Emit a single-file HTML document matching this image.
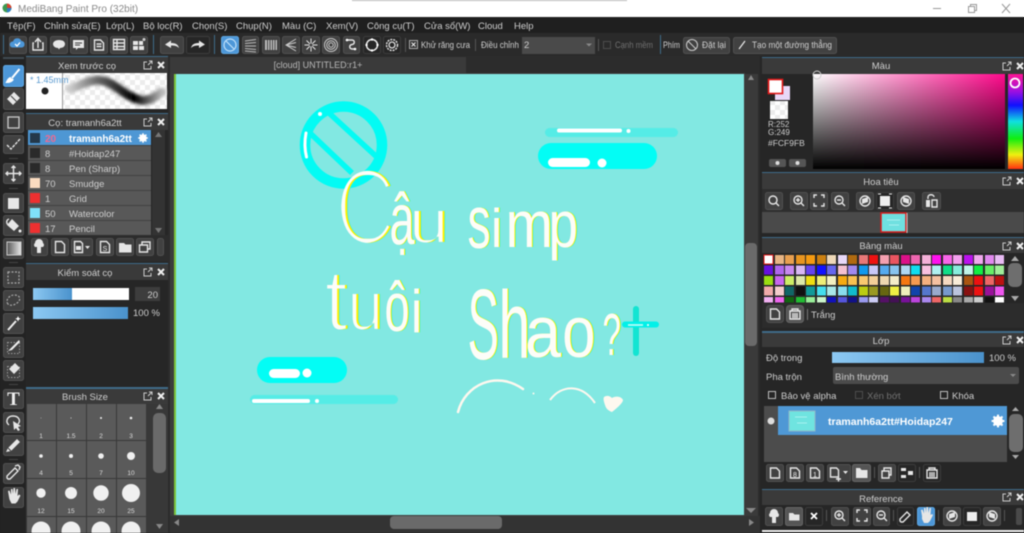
<!DOCTYPE html>
<html lang="vi"><head><meta charset="utf-8"><title>MediBang Paint Pro</title>
<style>
html,body{margin:0;padding:0;background:linear-gradient(#fff 0,#fff 17px,#232323 17px);width:1024px;height:533px;overflow:hidden}
svg{display:block;position:absolute;left:0;top:0;filter:blur(.45px)}
text{font-family:"Liberation Sans","DejaVu Sans",sans-serif;font-size:9.5px;fill:#cecece}
.b{fill:#414141;stroke:#505050;stroke-width:1}
.d{fill:#262626;stroke:#3d3d3d;stroke-width:1}
.i{fill:#e6e6e6;stroke:none}
.s{fill:none;stroke:#e6e6e6;stroke-width:1.4}
.h{fill:#3a3a3a}
.l{fill:#3f6b88}
.c{text-anchor:middle}
.w{fill:#fff;font-weight:bold}
.z{font-size:6.5px;text-anchor:middle;fill:#ddd}
.L text{font-size:100px;fill:#fff}
</style></head><body>
<svg width="1024" height="533" viewBox="0 0 1024 533" xmlns="http://www.w3.org/2000/svg">
<defs>
<linearGradient id="hg" x1="0" x2="1" y1="0" y2="0"><stop offset="0" stop-color="#fff"/><stop offset="1" stop-color="#ff0a8c"/></linearGradient>
<linearGradient id="vg" x1="0" x2="0" y1="0" y2="1"><stop offset="0" stop-color="#000" stop-opacity="0"/><stop offset="1" stop-color="#000"/></linearGradient>
<linearGradient id="hue" x1="0" x2="0" y1="0" y2="1"><stop offset="0" stop-color="#ff1493"/><stop offset=".18" stop-color="#a010e0"/><stop offset=".33" stop-color="#1010ff"/><stop offset=".5" stop-color="#10e0e0"/><stop offset=".68" stop-color="#10ee10"/><stop offset=".85" stop-color="#f0f010"/><stop offset="1" stop-color="#ff3010"/></linearGradient>
<linearGradient id="sl" x1="0" x2="1" y1="0" y2="0"><stop offset="0" stop-color="#8cc8f2"/><stop offset="1" stop-color="#4a92cc"/></linearGradient>
<linearGradient id="br" x1="0" x2="1" y1="0" y2="0"><stop offset="0" stop-color="#ccc"/><stop offset=".3" stop-color="#666"/><stop offset=".7" stop-color="#000"/><stop offset="1" stop-color="#bbb"/></linearGradient>
<linearGradient id="gr" x1="0" x2="1" y1="0" y2="0"><stop offset="0" stop-color="#555"/><stop offset="1" stop-color="#e8e8e8"/></linearGradient>
<pattern id="ck" width="10" height="10" patternUnits="userSpaceOnUse"><rect width="10" height="10" fill="#fff"/><rect width="5" height="5" fill="#ececec"/><rect x="5" y="5" width="5" height="5" fill="#ececec"/></pattern>
<filter id="sb" x="-20%" y="-50%" width="140%" height="200%"><feGaussianBlur stdDeviation="1.6"/></filter>
<g id="pc"><path d="M-11 -3h-3v7h7v-3M-10 0l4-4m-3 0h3v3" fill="none" stroke="#ccc" stroke-width="1"/><path d="M0-3l6 6m0-6l-6 6" stroke="#eee" stroke-width="2" fill="none"/></g>
<g id="gear"><circle r="3.6" fill="none" stroke="#fff" stroke-width="2.6"/><path d="M0-6.4V6.4M-6.4 0H6.4M-4.5-4.5L4.5 4.5M-4.5 4.5L4.5-4.5" stroke="#fff" stroke-width="2"/></g>
<filter id="f1" filterUnits="userSpaceOnUse" x="300" y="150" width="400" height="230" color-interpolation-filters="sRGB">
<feMorphology in="SourceAlpha" operator="erode" radius="1" result="e"/>
<feOffset in="e" dx="1.6" result="a"/><feFlood flood-color="#10f0ff"/><feComposite in2="a" operator="in" result="c"/>
<feOffset in="e" dx=".8" result="b"/><feFlood flood-color="#fff000"/><feComposite in2="b" operator="in" result="y"/>
<feOffset in="e" dx="-1" result="d"/><feFlood flood-color="#fdfdf8"/><feComposite in2="d" operator="in" result="w"/>
<feMerge><feMergeNode in="c"/><feMergeNode in="y"/><feMergeNode in="w"/></feMerge></filter>
<filter id="f2" filterUnits="userSpaceOnUse" x="300" y="150" width="400" height="230" color-interpolation-filters="sRGB">
<feMorphology in="SourceAlpha" operator="erode" radius="2" result="e"/>
<feOffset in="e" dx="1.6" result="a"/><feFlood flood-color="#10f0ff"/><feComposite in2="a" operator="in" result="c"/>
<feOffset in="e" dx=".8" result="b"/><feFlood flood-color="#fff000"/><feComposite in2="b" operator="in" result="y"/>
<feOffset in="e" dx="-1" result="d"/><feFlood flood-color="#fdfdf8"/><feComposite in2="d" operator="in" result="w"/>
<feMerge><feMergeNode in="c"/><feMergeNode in="y"/><feMergeNode in="w"/></feMerge></filter>
<filter id="f0" filterUnits="userSpaceOnUse" x="300" y="150" width="400" height="230" color-interpolation-filters="sRGB">
<feOffset in="SourceAlpha" dx="1.2" result="a"/><feFlood flood-color="#10f0ff"/><feComposite in2="a" operator="in" result="c"/>
<feOffset in="SourceAlpha" dx=".6" result="b"/><feFlood flood-color="#fff000"/><feComposite in2="b" operator="in" result="y"/>
<feOffset in="SourceAlpha" dx="-.6" result="d"/><feFlood flood-color="#fdfdf8"/><feComposite in2="d" operator="in" result="w"/>
<feMerge><feMergeNode in="c"/><feMergeNode in="y"/><feMergeNode in="w"/></feMerge></filter>
</defs>

<!-- base -->
<rect width="1024" height="533" fill="#232323"/>
<!-- title bar -->
<rect width="1024" height="17" fill="#fff"/>
<rect x="352" y="0" width="275" height="1" fill="#b8b8b8"/>
<circle cx="7" cy="8" r="4.5" fill="#3d9a52"/><path d="M7 3.5a4.5 4.5 0 0 1 4.5 4.5H7z" fill="#d8402c"/><path d="M7 8h4.5A4.5 4.5 0 0 1 7 12.500z" fill="#2f7bc0"/>
<text x="18" y="12" style="font-size:10px;fill:#8a8a8a">MediBang Paint Pro (32bit)</text>
<path d="M933 8.500h8" stroke="#999"/><path d="M968.500 6.500h6v6h-6zM970.500 6.500v-2h6v6h-2" fill="none" stroke="#999"/><path d="M1002 4l8 9m0-9l-8 9" stroke="#999" fill="none"/>
<!-- menu -->
<rect y="17" width="1024" height="16" fill="#1f1f1f"/>
<g>
<text x="7" y="29">Tệp(F)</text><text x="44" y="29">Chỉnh sửa(E)</text><text x="106" y="29">Lớp(L)</text><text x="143" y="29">Bộ lọc(R)</text><text x="192" y="29">Chọn(S)</text><text x="236" y="29">Chụp(N)</text><text x="282" y="29">Màu (C)</text><text x="326" y="29">Xem(V)</text><text x="367" y="29">Công cụ(T)</text><text x="424" y="29">Cửa sổ(W)</text><text x="478" y="29">Cloud</text><text x="514" y="29">Help</text>
</g>
<!-- toolbar -->
<rect y="33" width="1024" height="23" fill="#2a2a2a"/>
<rect x="3" y="35" width="1" height="19" fill="#3f6b88"/><rect x="153" y="35" width="1" height="19" fill="#3f6b88"/><rect x="214" y="35" width="1" height="19" fill="#3f6b88"/><rect x="660" y="35" width="1" height="19" fill="#3f6b88"/>
<rect x="9.500" y="36.500" width="17" height="17" rx="2" fill="#414141" stroke="#505050"/>
<path d="M12.500 47.500a3 3 0 0 1 .5-6 4.500 4.500 0 0 1 8.500-.5 3.300 3.300 0 0 1 .5 6.500z" fill="#4d97d8"/><path d="M15 44l2 2 3-3.500" stroke="#fff" stroke-width="1.300" fill="none"/>
<rect class="b" x="29.500" y="36.500" width="17" height="17" rx="2"/><path class="s" d="M38 48v-8M35 42l3-3.500 3 3.500M34 43h-1v7h10v-7h-1"/>
<rect class="b" x="50.500" y="36.500" width="17" height="17" rx="2"/><path class="i" d="M59 40c4 0 6 1.800 6 4s-2 4-5 4l-1 1.500-1-1.500c-3 0-5-2-5-4s2-4 6-4z"/>
<rect class="b" x="70.500" y="36.500" width="17" height="17" rx="2"/><path class="i" d="M73 40h11v8h-6l-2 2v-2h-3z"/><path d="M75 43h7M75 45h5" stroke="#3d3d3d"/>
<rect class="b" x="90.500" y="36.500" width="17" height="17" rx="2"/><path class="s" d="M94.500 40h6l3 3v7h-9zM96.500 44h5M96.500 46.500h5"/>
<rect class="b" x="110.500" y="36.500" width="17" height="17" rx="2"/><path class="s" stroke-width="1" d="M113.500 39.500h11v10h-11zM113.500 43h11M113.500 46.500h11M117 39.500v10"/>
<rect class="b" x="130.500" y="36.500" width="17" height="17" rx="2"/><path class="i" d="M133 41h5v4h-5zM139 41h4v4h-4zM133 46h5v4h-5zM139 46h5v4h-5z"/><circle cx="144" cy="39.500" r="1.500" fill="#ccc"/>
<rect class="b" x="160.500" y="36.500" width="23" height="17" rx="2"/><path class="i" d="M165 44.500l6-4v2.500c4 0 7 1 8 5-2-2-4-2.500-8-2.500V48z"/>
<rect class="d" x="186.500" y="36.500" width="23" height="17" rx="2"/><path class="i" d="M205 44.500l-6-4v2.500c-4 0-7 1-8 5 2-2 4-2.500 8-2.500V48z"/>
<rect x="221.500" y="36.500" width="17" height="17" rx="2" fill="#4d97d8" stroke="#5ea6e0"/><circle cx="230" cy="45" r="6" fill="none" stroke="#bfe0fa" stroke-width="1.200"/><path d="M226 41l8 8" stroke="#bfe0fa" stroke-width="1.200"/>
<rect class="b" x="242.500" y="36.500" width="16" height="17" rx="2"/><path d="M245 41l11-1.500M245 43.500l11-1M245 46h11M245 48.500l11 1M245 51l11 1" stroke="#bbb" fill="none"/>
<rect class="b" x="262.500" y="36.500" width="17" height="17" rx="2"/><path d="M265 40h12v10h-12z" fill="#bbb"/><path d="M267.500 40v10M270 40v10M272.500 40v10M275 40v10" stroke="#444" fill="none"/>
<rect class="b" x="282.500" y="36.500" width="17" height="17" rx="2"/><path d="M296 39l-10 6 10 6M296 42.500l-10 2.500 10 2.500" stroke="#ccc" fill="none"/>
<rect class="b" x="302.500" y="36.500" width="17" height="17" rx="2"/><path d="M311 38.500v13M304.500 45h13M306.500 40.500l9 9M315.500 40.500l-9 9" stroke="#e6e6e6"/><circle cx="311" cy="45" r="1.500" fill="#3d3d3d"/>
<rect class="b" x="322.500" y="36.500" width="17" height="17" rx="2"/><circle cx="331" cy="45" r="6.500" fill="none" stroke="#ccc"/><circle cx="331" cy="45" r="4.300" fill="none" stroke="#ccc"/><circle cx="331" cy="45" r="2.200" fill="none" stroke="#ccc"/>
<rect class="b" x="343.500" y="36.500" width="16" height="17" rx="2"/><path class="s" d="M347 40h5c3 0 3 4 0 4.500-3 .5-3 4 0 4.500h3"/><circle cx="347" cy="40" r="1.300" fill="#fff"/><circle cx="355" cy="49" r="1.300" fill="#fff"/>
<rect class="d" x="363.500" y="36.500" width="17" height="17" rx="2"/><circle cx="372" cy="45" r="5.500" fill="none" stroke="#eee" stroke-width="1.500"/><circle cx="372" cy="39.500" r="1.200" fill="#fff"/><circle cx="372" cy="50.500" r="1.200" fill="#fff"/><circle cx="366.500" cy="45" r="1.200" fill="#fff"/><circle cx="377.500" cy="45" r="1.200" fill="#fff"/>
<rect class="d" x="383.500" y="36.500" width="17" height="17" rx="2"/><circle cx="392" cy="45" r="3" fill="none" stroke="#ddd" stroke-width="1.300"/><circle cx="392" cy="45" r="5.500" fill="none" stroke="#ddd" stroke-width="1.500" stroke-dasharray="2 1"/>
<rect x="405" y="38" width="1" height="14" fill="#555"/>
<rect x="409.500" y="40.500" width="8" height="8" fill="#333" stroke="#aaa"/><path d="M411.500 42.500l4 4m0-4l-4 4" stroke="#eee"/>
<text x="421" y="48" textLength="49" lengthAdjust="spacingAndGlyphs">Khử răng cưa</text>
<rect x="475" y="39" width="1" height="12" fill="#555"/>
<text x="481" y="48" textLength="38" lengthAdjust="spacingAndGlyphs">Điều chỉnh</text>
<rect x="522" y="37" width="73" height="17" fill="#4a4a4a"/><text x="524" y="48">2</text><path d="M586 43.500h6l-3 3z" fill="#888"/>
<rect x="598" y="39" width="1" height="12" fill="#555"/>
<rect x="603.500" y="41.500" width="7" height="7" fill="none" stroke="#4c4c4c"/>
<text x="615" y="48" textLength="38" lengthAdjust="spacingAndGlyphs" style="fill:#707070">Cạnh mềm</text>
<text x="663" y="48" textLength="17" lengthAdjust="spacingAndGlyphs">Phím</text>
<rect class="b" x="683.500" y="37.500" width="46" height="16" rx="2"/><circle cx="692" cy="45" r="5.500" fill="none" stroke="#ccc"/><path d="M688 41l8 8" stroke="#ccc"/><text x="702" y="48" textLength="24" lengthAdjust="spacingAndGlyphs">Đặt lại</text>
<rect class="b" x="733.500" y="37.500" width="103" height="16" rx="2"/><path d="M739 49l6-8" stroke="#eee" stroke-width="1.200"/><text x="752" y="48" textLength="80" lengthAdjust="spacingAndGlyphs">Tạo một đường thẳng</text>

<!-- left tool column -->
<rect x="0" y="56" width="26" height="477" fill="#232323"/>
<rect x="3" y="57" width="21" height="2" fill="#3f4a52"/>
<rect x="3.500" y="65.500" width="20" height="21" rx="2" fill="#4d97d8" stroke="#5ea6e0"/><path d="M19.500 69l-7.500 9M11 78c-2 0-3 2-4 4 3 0 5-1 6-3" stroke="#fff" stroke-width="2" fill="#fff"/>
<rect class="b" x="3.500" y="88.500" width="20" height="21" rx="2"/><path class="i" d="M14 92l6 6-7 7-6-6z"/><path d="M11 96l5.500 5.500" stroke="#3d3d3d"/>
<rect class="b" x="3.500" y="112.500" width="20" height="20" rx="2"/><rect x="8" y="117" width="11" height="11" fill="none" stroke="#ccc" stroke-width="1.300"/>
<rect class="b" x="3.500" y="135.500" width="20" height="18" rx="2"/><path class="s" d="M7 145l4 4 9-10" stroke-dasharray="3 1" stroke-width="1.800"/>
<rect x="9" y="158" width="9" height="1" fill="#444"/>
<rect class="b" x="3.500" y="163.500" width="20" height="20" rx="2"/><path class="s" d="M13.500 166v15M6 173.500h15M11.500 168l2-2 2 2M11.500 179l2 2 2-2M8 171.500l-2 2 2 2M19 171.500l2 2-2 2"/>
<rect x="9" y="188" width="9" height="1" fill="#444"/>
<rect class="b" x="3.500" y="193.500" width="20" height="19" rx="2"/><rect x="8" y="198" width="11" height="11" fill="#e8e8e8"/>
<rect class="b" x="3.500" y="215.500" width="20" height="20" rx="2"/><path class="i" d="M12 219l7 7-5 5-7-6z"/><path d="M9 219c-3 1-3 5 0 6" class="s"/><circle cx="20" cy="231" r="1.500" fill="#eee"/>
<rect class="b" x="3.500" y="238.500" width="20" height="20" rx="2"/><rect x="7" y="242" width="14" height="13" fill="url(#gr)" stroke="#ccc"/>
<rect x="9" y="262" width="9" height="1" fill="#444"/>
<rect class="b" x="3.500" y="267.500" width="20" height="20" rx="2"/><rect x="8" y="272" width="11" height="11" fill="none" stroke="#aaa" stroke-dasharray="2 1.500" stroke-width="1.200"/>
<rect class="b" x="3.500" y="290.500" width="20" height="20" rx="2"/><path d="M8 304c-3-3 1-9 6-9s7 3 5 6-8 6-11 3z" fill="none" stroke="#aaa" stroke-dasharray="2 1.500" stroke-width="1.200"/>
<rect class="b" x="3.500" y="313.500" width="20" height="20" rx="2"/><path d="M8 330l8-9" stroke="#eee" stroke-width="2"/><path d="M18 316l.8 2 2 .8-2 .8-.8 2-.8-2-2-.8 2-.8z" fill="#fff"/>
<rect class="b" x="3.500" y="337.500" width="20" height="20" rx="2"/><rect x="7.500" y="342.500" width="12" height="11" fill="none" stroke="#999" stroke-dasharray="1.500 1.500"/><path d="M8 351l3-3 8-8 1 2-8 8z" fill="#eee"/>
<rect class="b" x="3.500" y="360.500" width="20" height="20" rx="2"/><rect x="7.500" y="366.500" width="12" height="11" fill="none" stroke="#999" stroke-dasharray="1.500 1.500"/><path class="i" d="M15 363l5 5-6 6-5-5z"/>
<rect x="9" y="384" width="9" height="1" fill="#444"/>
<rect class="b" x="3.500" y="389.500" width="20" height="19" rx="2"/><text x="13.500" y="405" class="c" style="font-family:'Liberation Serif',serif;font-size:19px;font-weight:bold;fill:#eee">T</text>
<rect class="b" x="3.500" y="412.500" width="20" height="20" rx="2"/><path class="s" d="M9 425c-4-3-2-9 4-9s8 5 5 8"/><path class="i" d="M13 421l8 5-3 1 2 3-2 1-2-3-2 2z"/>
<rect class="b" x="3.500" y="435.500" width="20" height="20" rx="2"/><path class="i" d="M8 448l9-9 3 3-9 9-5 1z"/><path d="M8 448l3 3" stroke="#3d3d3d"/>
<rect x="9" y="459" width="9" height="1" fill="#444"/>
<rect class="b" x="3.500" y="463.500" width="20" height="20" rx="2"/><path class="s" d="M8 479l-1-1 0-2 8-8 3 3-8 8zM15 466l3-1 2 2-1 3"/>
<rect class="b" x="3.500" y="487.500" width="20" height="20" rx="2"/><path class="i" d="M9 497l-1-6 1.500-.5 1.500 4V489h1.500l.5 5 .5-6h1.500l.5 6 1-5h1.500l-.5 7 1.500-1.500 1.500 1-3 6-2 2h-4l-2-4z"/>

<!-- brush preview panel -->
<rect x="26" y="56" width="142" height="477" fill="#262626"/>
<rect x="26" y="56" width="142" height="1" class="l"/>
<rect x="26" y="57" width="142" height="16" class="h"/>
<text x="87" y="69" class="c">Xem trước cọ</text>
<use href="#pc" x="158" y="65"/>
<rect x="26" y="73" width="141" height="36" fill="url(#ck)"/>
<rect x="26" y="73" width="36" height="36" fill="#fff"/><rect x="62" y="73" width="1" height="36" fill="#999"/>
<text x="30" y="83" style="fill:#5a9ad0;font-size:9px">* 1.45mm</text>
<circle cx="45" cy="91" r="3.500" fill="#222"/>
<path d="M70 89C84 84 92 78 104 81s20 15 36 19c10 2 16-4 22-8" fill="none" stroke="url(#br)" stroke-width="9" stroke-linecap="round" filter="url(#sb)"/>
<rect x="26" y="113" width="142" height="1" class="l"/>
<rect x="26" y="114" width="142" height="16" class="h"/>
<text x="85" y="126" class="c">Cọ: tramanh6a2tt</text>
<use href="#pc" x="158" y="122"/>
<!-- brush list -->
<rect x="28" y="130" width="123" height="105" fill="#585858"/>
<rect x="28" y="130" width="123" height="15" fill="#4e97d4"/>
<path d="M28 145.500h123M28 160.500h123M28 175.500h123M28 190.500h123M28 205.500h123M28 220.500h123" stroke="#414141"/>
<rect x="30" y="133" width="10" height="10" fill="#24384a"/><rect x="30" y="148" width="10" height="10" fill="#2a2a2a"/><rect x="30" y="163" width="10" height="10" fill="#2a2a2a"/><rect x="30" y="178" width="10" height="10" fill="#fbdcc0"/><rect x="30" y="193" width="10" height="10" fill="#ee3030"/><rect x="30" y="208" width="10" height="10" fill="#80e0f8"/><rect x="30" y="223" width="10" height="10" fill="#ee3030"/>
<text x="45" y="142" style="fill:#f06a90;font-weight:bold;font-size:10px">20</text><text x="69" y="142" class="w" style="font-size:10px">tramanh6a2tt</text>
<use href="#gear" transform="translate(143 138) scale(.75)"/>
<text x="45" y="157">8</text><text x="69" y="157">#Hoidap247</text>
<text x="45" y="172">8</text><text x="69" y="172">Pen (Sharp)</text>
<text x="45" y="187">70</text><text x="69" y="187">Smudge</text>
<text x="45" y="202">1</text><text x="69" y="202">Grid</text>
<text x="45" y="217">50</text><text x="69" y="217">Watercolor</text>
<text x="45" y="232">17</text><text x="69" y="232">Pencil</text>
<rect x="152" y="130" width="13" height="105" fill="#333"/>
<path d="M155 137l3.500-5 3.500 5z" fill="#777"/><path d="M155 228l3.500 5 3.500-5z" fill="#777"/>
<!-- brush list buttons -->
<rect x="26" y="235" width="142" height="27" fill="#2c2c2c"/>
<rect class="b" x="31.500" y="238.500" width="16" height="17" rx="2"/><path class="i" d="M35 247a2.500 2.500 0 0 1 0-4 4 4 0 0 1 8 0 2.500 2.500 0 0 1 0 4h-2v6h-4v-6z"/>
<rect class="b" x="51.500" y="238.500" width="17" height="17" rx="2"/><path class="s" d="M55.500 241.500h6l3 3v8h-9z"/>
<rect class="b" x="71.500" y="238.500" width="21" height="17" rx="2"/><path class="s" d="M74.500 241.500h6l2 2v9h-8z"/><rect x="76" y="246" width="5" height="4" fill="#e6e6e6"/><path d="M85 246h5l-2.500 3z" fill="#e6e6e6"/>
<rect class="b" x="96.500" y="238.500" width="17" height="17" rx="2"/><path class="s" d="M100.500 241.500h6l3 3v8h-9z"/><text x="105" y="251" class="c" style="font-size:7px;fill:#eee">S</text>
<rect class="b" x="116.500" y="238.500" width="17" height="17" rx="2"/><path class="i" d="M119 243h5l1.500 1.500h6v8H119z"/>
<rect class="b" x="136.500" y="238.500" width="17" height="17" rx="2"/><path class="s" d="M139.500 245h8v7h-8zM142 245v-3h8v7h-2.500" stroke-width="1"/>
<rect class="b" x="157.500" y="238.500" width="6" height="17" rx="2"/>
<!-- kiem soat co -->
<rect x="26" y="263" width="142" height="1" class="l"/>
<rect x="26" y="264" width="142" height="16" class="h"/>
<text x="85" y="276" class="c">Kiểm soát cọ</text>
<use href="#pc" x="158" y="272"/>
<rect x="33" y="288" width="96" height="12" fill="#fff"/><rect x="33" y="288" width="39" height="12" fill="url(#sl)"/>
<rect x="135" y="287" width="25" height="14" fill="#3d3d3d"/><text x="158" y="298" style="text-anchor:end">20</text>
<rect x="33" y="307" width="95" height="12" fill="url(#sl)"/><text x="133" y="316">100 %</text>
<!-- brush size -->
<rect x="26" y="387" width="142" height="2" class="l"/>
<rect x="26" y="389" width="142" height="15" class="h"/>
<text x="85" y="400" class="c">Brush Size</text>
<use href="#pc" x="158" y="396"/>
<rect x="26" y="404" width="142" height="129" fill="#383838"/>
<g fill="#5a5a5a">
<rect x="27" y="404" width="29" height="36"/><rect x="57" y="404" width="29" height="36"/><rect x="87" y="404" width="29" height="36"/><rect x="117" y="404" width="29" height="36"/>
<rect x="27" y="441" width="29" height="37"/><rect x="57" y="441" width="29" height="37"/><rect x="87" y="441" width="29" height="37"/><rect x="117" y="441" width="29" height="37"/>
<rect x="27" y="479" width="29" height="37"/><rect x="57" y="479" width="29" height="37"/><rect x="87" y="479" width="29" height="37"/><rect x="117" y="479" width="29" height="37"/>
<rect x="27" y="517" width="29" height="16"/><rect x="57" y="517" width="29" height="16"/><rect x="87" y="517" width="29" height="16"/><rect x="117" y="517" width="29" height="16"/>
</g>
<g fill="#f0f0f0">
<circle cx="41" cy="418" r=".5" opacity=".5"/><circle cx="71" cy="418" r=".6" opacity=".7"/><circle cx="101" cy="418" r="1"/><circle cx="131" cy="418" r="1.300"/>
<circle cx="41" cy="456" r="1.800"/><circle cx="71" cy="456" r="2"/><circle cx="101" cy="456" r="2.800"/><circle cx="131" cy="456" r="4"/>
<circle cx="41" cy="493" r="4.700"/><circle cx="71" cy="493" r="6"/><circle cx="101" cy="493" r="7.700"/><circle cx="131" cy="493" r="9"/>
<circle cx="41" cy="531" r="9.500"/><circle cx="71" cy="531" r="9.500"/><circle cx="101" cy="531" r="9.500"/><circle cx="131" cy="531" r="9.500"/>
</g>
<text class="z" x="41" y="438">1</text><text class="z" x="71" y="438">1.5</text><text class="z" x="101" y="438">2</text><text class="z" x="131" y="438">3</text>
<text class="z" x="41" y="475">4</text><text class="z" x="71" y="475">5</text><text class="z" x="101" y="475">7</text><text class="z" x="131" y="475">10</text>
<text class="z" x="41" y="513">12</text><text class="z" x="71" y="513">15</text><text class="z" x="101" y="513">20</text><text class="z" x="131" y="513">25</text>
<path d="M156 409l3.500-5 3.500 5z" fill="#888"/><path d="M156 524l3.500 5 3.500-5z" fill="#888"/>
<rect x="153" y="413" width="13" height="60" rx="5" fill="#6a6a6a"/>

<!-- canvas area -->
<rect x="168" y="56" width="594" height="477" fill="#2c2c2c"/>
<rect x="170" y="57" width="296" height="16" fill="#3a3a3a"/>
<text x="318" y="68" class="c" style="font-size:9px;fill:#b8b8b8">[cloud] UNTITLED:r1+</text>
<rect x="170" y="73" width="575" height="443" fill="#3c3c3c"/>
<rect x="174" y="74" width="570" height="441" fill="#82e8e2"/>
<rect x="174" y="74" width="2" height="441" fill="#7cc23a"/>
<!-- art -->
<circle cx="343.500" cy="145" r="38.500" fill="none" stroke="#03fbf4" stroke-width="10.500"/>
<path d="M329 113l50 46M310 133l42 40" stroke="#03fbf4" stroke-width="5.500" fill="none"/>
<path d="M306 133c-1.500 8-1.500 16 .5 24" stroke="#fff" stroke-width="3" fill="none" stroke-linecap="round"/>
<circle cx="320" cy="114" r="2" fill="#fff"/>
<rect x="545" y="128" width="133" height="9" rx="4.500" fill="#55ece6"/>
<rect x="557" y="128.500" width="65" height="4" rx="2" fill="#fff"/><circle cx="628.500" cy="131" r="2" fill="#fff"/>
<rect x="538" y="143" width="119" height="26" rx="13" fill="#03fdf5"/>
<rect x="548" y="158" width="42" height="9" rx="4.500" fill="#fff"/><circle cx="602" cy="163" r="4.500" fill="#fff"/>
<rect x="257" y="357" width="90" height="26" rx="13" fill="#03fdf5"/>
<rect x="269" y="369" width="31" height="9" rx="4.500" fill="#fff"/><circle cx="307" cy="373" r="4.500" fill="#fff"/>
<rect x="250" y="395" width="148" height="9" rx="4.500" fill="#55ece6"/>
<rect x="252" y="399" width="58" height="4" rx="2" fill="#fff"/><circle cx="317" cy="401" r="2" fill="#fff"/>
<path d="M636 309v44" stroke="#12e4d2" stroke-width="6" stroke-linecap="round"/>
<path d="M625 324.500h31" stroke="#03f0e8" stroke-width="6" stroke-linecap="round"/>
<path d="M628 325h15" stroke="#c8fbf6" stroke-width="1.600"/><circle cx="648" cy="325" r="1" fill="#fff"/>
<path d="M458 412c7-27 38-42 65-23" stroke="#fdf8ef" stroke-width="2.500" fill="none" stroke-linecap="round"/>
<path d="M550 400c12-16 32-16 45 3" stroke="#fdf8ef" stroke-width="2" fill="none"/>
<circle cx="533.500" cy="393.500" r="1" fill="#fdf8ef"/>
<path d="M604 397c3-2 6-1 8 1 3-2 9-2 11 2 0 3-7 9-11 12-3-1-6-3-7-7-1-3-2-6-1-8z" fill="#fdf8ef"/>
<g class="L" filter="url(#f2)">
<text transform="translate(336 244) scale(.84 1.08)">C</text>
</g>
<g class="L" filter="url(#f1)">
<text transform="translate(410 243) scale(.71 .62)">u</text>
<text transform="translate(326 330) scale(.8 .86)">t</text>
<text transform="translate(348.500 330) scale(.64 .7)">u</text>
</g>
<g class="L" filter="url(#f0)">
<text transform="translate(390 244) scale(.45 .72)">ậ</text>
<text transform="translate(468 248) scale(.46 .75)">s</text>
<text transform="translate(491.500 247) scale(.5 .55)">i</text>
<text transform="translate(506 247) scale(.57 .66)">m</text>
<text transform="translate(549 247) scale(.53 .66)">p</text>
<text transform="translate(385 331) scale(.45 .7)">ô</text>
<text transform="translate(411.500 332) scale(.5 .6)">i</text>
<text transform="translate(468 359) scale(.47 1)">S</text>
<text transform="translate(499 358) scale(.57 .96)">h</text>
<text transform="translate(525.400 357) scale(.65 .72)">a</text>
<text transform="translate(562.600 357) scale(.6 .72)">o</text>
<text transform="translate(603 355) scale(.33 .59)">?</text>
</g>
<!-- canvas scrollbars -->
<rect x="745" y="74" width="13" height="442" fill="#3a3a3a"/>
<rect x="745" y="243" width="12" height="103" rx="4" fill="#6a6a6a"/>
<path d="M748 80l3-5 3 5z" fill="#888"/><path d="M746 508l5 5 5-5z" fill="#888"/>
<rect x="170" y="516" width="590" height="17" fill="#333"/>
<rect x="390" y="516" width="112" height="13" rx="4" fill="#6a6a6a"/>
<path d="M179 519v7l-5-3.500z" fill="#888"/><path d="M749 519v7l5-3.500z" fill="#888"/>

<!-- right column -->
<rect x="760" y="56" width="264" height="477" fill="#262626"/>
<!-- color -->
<rect x="762" y="57" width="262" height="1" class="l"/>
<rect x="762" y="58" width="262" height="16" class="h"/>
<text x="881" y="69" class="c">Màu</text>
<use href="#pc" x="1017" y="66"/>
<rect x="813" y="74" width="192" height="95" fill="url(#hg)"/>
<rect x="813" y="74" width="192" height="95" fill="url(#vg)"/>
<circle cx="817" cy="75" r="4" fill="none" stroke="#ccc"/>
<rect x="1008" y="74" width="15" height="95" fill="url(#hue)"/>
<circle cx="1015" cy="83" r="4.500" fill="none" stroke="#fff" stroke-width="1.800"/>
<rect x="775" y="86" width="15" height="14" fill="#e8d8f8"/>
<rect x="768.500" y="79.500" width="14" height="14" fill="#fff" stroke="#e01818" stroke-width="1.600"/>
<rect x="770" y="101" width="18" height="18" fill="url(#ck)"/>
<text x="768" y="127" style="font-size:8px">R:252</text><text x="768" y="135" style="font-size:8px">G:249</text><text x="768" y="146" style="font-size:8.500px">#FCF9FB</text>
<rect x="769" y="159" width="17" height="8" rx="2" fill="#555"/><rect x="789" y="159" width="17" height="8" rx="2" fill="#555"/><circle cx="777.500" cy="163" r="2" fill="#ddd"/><circle cx="797.500" cy="163" r="2" fill="#ddd"/>
<!-- navigator -->
<rect x="762" y="172" width="262" height="1" class="l"/>
<rect x="762" y="173" width="262" height="16" class="h"/>
<text x="881" y="185" class="c">Hoa tiêu</text>
<use href="#pc" x="1017" y="181"/>
<rect x="762" y="189" width="262" height="23" fill="#2e2e2e"/>
<rect class="b" x="765.500" y="192.500" width="17" height="17" rx="2"/><circle cx="773" cy="200" r="4" class="s"/><path class="s" d="M776 203l3 3"/>
<rect class="b" x="790.500" y="192.500" width="17" height="17" rx="2"/><circle cx="798" cy="200" r="4" class="s"/><path class="s" d="M801 203l3 3M796 200h4M798 198v4"/>
<rect class="b" x="810.500" y="192.500" width="17" height="17" rx="2"/><path class="s" d="M814 198v-3h3M824 198v-3h-3M814 203v3h3M824 203v3h-3" stroke-width="1.200"/>
<rect class="b" x="831.500" y="192.500" width="17" height="17" rx="2"/><circle cx="839" cy="200" r="4" class="s"/><path class="s" d="M842 203l3 3M837 200h4"/>
<rect class="b" x="856.500" y="192.500" width="17" height="17" rx="2"/><circle cx="865" cy="201" r="5" class="s"/><path class="i" d="M862 199l6-2v5l-6 2z"/>
<rect class="d" x="876.500" y="192.500" width="17" height="17" rx="2"/><rect x="880" y="196" width="10" height="10" fill="#eee"/><path d="M878 194h3M889 194h3M878 208h3M889 208h3" stroke="#eee"/>
<rect class="b" x="897.500" y="192.500" width="17" height="17" rx="2"/><circle cx="906" cy="201" r="5" class="s"/><path class="i" d="M903 197l6 2v5l-6-2z"/>
<rect class="b" x="922.500" y="192.500" width="18" height="17" rx="2"/><path class="i" d="M926 200h4v7h-4z"/><path class="s" d="M932 200h5v7h-5zM928 199v-2c0-3 6-3 6 0" stroke-width="1"/>
<rect x="762" y="212" width="262" height="21" fill="#4a4a4a"/>
<rect x="881" y="213" width="25" height="19" fill="#6fe0e0" stroke="#d81818" stroke-width="1.500"/><rect x="906.500" y="213" width="1" height="20" fill="#ccc"/>
<path d="M887 220h13M889 225h10" stroke="#a8f0f0"/>
<!-- palette -->
<rect x="762" y="237" width="262" height="1" class="l"/>
<rect x="762" y="238" width="262" height="15" class="h"/>
<text x="881" y="249" class="c">Bảng màu</text>
<use href="#pc" x="1017" y="246"/>
<g>
<!-- row 1 -->
<rect x="764" y="255" width="9" height="9" fill="#fff" stroke="#e01818"/><rect x="775" y="255" width="9" height="9" fill="#e8b584"/><rect x="785" y="255" width="9" height="9" fill="#e8a050"/><rect x="796" y="255" width="9" height="9" fill="#e89520"/><rect x="806" y="255" width="9" height="9" fill="#f59a10"/><rect x="817" y="255" width="9" height="9" fill="#cc8010"/><rect x="827" y="255" width="9" height="9" fill="#eed8b8"/><rect x="838" y="255" width="9" height="9" fill="#e8d8f8"/><rect x="848" y="255" width="9" height="9" fill="#b06a10"/><rect x="859" y="255" width="9" height="9" fill="#e87878"/><rect x="869" y="255" width="9" height="9" fill="#ee1111"/><rect x="880" y="255" width="9" height="9" fill="#f4a0b0"/><rect x="890" y="255" width="9" height="9" fill="#ea5560"/><rect x="901" y="255" width="9" height="9" fill="#dd1188"/><rect x="911" y="255" width="9" height="9" fill="#ee66b0"/><rect x="922" y="255" width="9" height="9" fill="#f4b0d8"/><rect x="932" y="255" width="9" height="9" fill="#ff11ee"/><rect x="943" y="255" width="9" height="9" fill="#f866e8"/><rect x="953" y="255" width="9" height="9" fill="#f4a0ee"/><rect x="964" y="255" width="9" height="9" fill="#bb11ee"/><rect x="974" y="255" width="9" height="9" fill="#f0a8ee"/><rect x="985" y="255" width="9" height="9" fill="#e088ee"/><rect x="995" y="255" width="9" height="9" fill="#e8bbf4"/>
<!-- row 2 -->
<rect x="764" y="265.500" width="9" height="9" fill="#6611dd"/><rect x="775" y="265.500" width="9" height="9" fill="#b066ee"/><rect x="785" y="265.500" width="9" height="9" fill="#c888f0"/><rect x="796" y="265.500" width="9" height="9" fill="#d8b8f4"/><rect x="806" y="265.500" width="9" height="9" fill="#6644ee"/><rect x="817" y="265.500" width="9" height="9" fill="#1111ff"/><rect x="827" y="265.500" width="9" height="9" fill="#6666ee"/><rect x="838" y="265.500" width="9" height="9" fill="#f4c0d0"/><rect x="848" y="265.500" width="9" height="9" fill="#a088ee"/><rect x="859" y="265.500" width="9" height="9" fill="#1199ee"/><rect x="869" y="265.500" width="9" height="9" fill="#c8c8f8"/><rect x="880" y="265.500" width="9" height="9" fill="#55aaee"/><rect x="890" y="265.500" width="9" height="9" fill="#88c4ee"/><rect x="901" y="265.500" width="9" height="9" fill="#b0d8f0"/><rect x="911" y="265.500" width="9" height="9" fill="#11ddee"/><rect x="922" y="265.500" width="9" height="9" fill="#f8c0e0"/><rect x="932" y="265.500" width="9" height="9" fill="#b0f0f0"/><rect x="943" y="265.500" width="9" height="9" fill="#11dd88"/><rect x="953" y="265.500" width="9" height="9" fill="#88eedd"/><rect x="964" y="265.500" width="9" height="9" fill="#c0f4e8"/><rect x="974" y="265.500" width="9" height="9" fill="#11ee44"/><rect x="985" y="265.500" width="9" height="9" fill="#66ee66"/><rect x="995" y="265.500" width="9" height="9" fill="#a0ee99"/>
<!-- row 3 -->
<rect x="764" y="276" width="9" height="9" fill="#99dd11"/><rect x="775" y="276" width="9" height="9" fill="#c866ee"/><rect x="785" y="276" width="9" height="9" fill="#ccee66"/><rect x="796" y="276" width="9" height="9" fill="#dde8a8"/><rect x="806" y="276" width="9" height="9" fill="#eedd11"/><rect x="817" y="276" width="9" height="9" fill="#eeee77"/><rect x="827" y="276" width="9" height="9" fill="#f4f0c0"/><rect x="838" y="276" width="9" height="9" fill="#f5aa11"/><rect x="848" y="276" width="9" height="9" fill="#f8c050"/><rect x="859" y="276" width="9" height="9" fill="#f8c870"/><rect x="869" y="276" width="9" height="9" fill="#f4d098"/><rect x="880" y="276" width="9" height="9" fill="#eed8b0"/><rect x="890" y="276" width="9" height="9" fill="#f4ecc8"/><rect x="901" y="276" width="9" height="9" fill="#f57711"/><rect x="911" y="276" width="9" height="9" fill="#f59a50"/><rect x="922" y="276" width="9" height="9" fill="#f4b080"/><rect x="932" y="276" width="9" height="9" fill="#f4c0a0"/><rect x="943" y="276" width="9" height="9" fill="#f4d8c0"/><rect x="953" y="276" width="9" height="9" fill="#f8ecd8"/><rect x="964" y="276" width="9" height="9" fill="#aa5511"/><rect x="974" y="276" width="9" height="9" fill="#ee1111"/><rect x="985" y="276" width="9" height="9" fill="#ee6666"/><rect x="995" y="276" width="9" height="9" fill="#bb1111"/>
<!-- row 4 -->
<rect x="764" y="286.500" width="9" height="9" fill="#f0aaaa"/><rect x="775" y="286.500" width="9" height="9" fill="#f4cccc"/><rect x="785" y="286.500" width="9" height="9" fill="#116666"/><rect x="796" y="286.500" width="9" height="9" fill="#111111"/><rect x="806" y="286.500" width="9" height="9" fill="#119999"/><rect x="817" y="286.500" width="9" height="9" fill="#44ddee"/><rect x="827" y="286.500" width="9" height="9" fill="#a8e8e8"/><rect x="838" y="286.500" width="9" height="9" fill="#88ddee"/><rect x="848" y="286.500" width="9" height="9" fill="#11bbcc"/><rect x="859" y="286.500" width="9" height="9" fill="#bbcc11"/><rect x="869" y="286.500" width="9" height="9" fill="#999922"/><rect x="880" y="286.500" width="9" height="9" fill="#666611"/><rect x="890" y="286.500" width="9" height="9" fill="#eeee44"/><rect x="901" y="286.500" width="9" height="9" fill="#eeeebb"/><rect x="911" y="286.500" width="9" height="9" fill="#1144aa"/><rect x="922" y="286.500" width="9" height="9" fill="#5577cc"/><rect x="932" y="286.500" width="9" height="9" fill="#99aacc"/><rect x="943" y="286.500" width="9" height="9" fill="#7799cc"/><rect x="953" y="286.500" width="9" height="9" fill="#bbc4dd"/><rect x="964" y="286.500" width="9" height="9" fill="#881111"/><rect x="974" y="286.500" width="9" height="9" fill="#ee1111"/><rect x="985" y="286.500" width="9" height="9" fill="#991199"/><rect x="995" y="286.500" width="9" height="9" fill="#ee55ee"/>
<!-- row 5 -->
<rect x="764" y="297" width="9" height="5.500" fill="#f0b0f0"/><rect x="775" y="297" width="9" height="5.500" fill="#ee66ee"/><rect x="785" y="297" width="9" height="5.500" fill="#116611"/><rect x="796" y="297" width="9" height="5.500" fill="#22bb33"/><rect x="806" y="297" width="9" height="5.500" fill="#99ee99"/><rect x="817" y="297" width="9" height="5.500" fill="#ccf4cc"/><rect x="827" y="297" width="9" height="5.500" fill="#1111bb"/><rect x="838" y="297" width="9" height="5.500" fill="#5555dd"/><rect x="848" y="297" width="9" height="5.500" fill="#111188"/><rect x="859" y="297" width="9" height="5.500" fill="#9999ee"/><rect x="869" y="297" width="9" height="5.500" fill="#ccccf4"/><rect x="880" y="297" width="9" height="5.500" fill="#551166"/><rect x="890" y="297" width="9" height="5.500" fill="#441155"/><rect x="901" y="297" width="9" height="5.500" fill="#771199"/><rect x="911" y="297" width="9" height="5.500" fill="#bb44dd"/><rect x="922" y="297" width="9" height="5.500" fill="#aa88ee"/><rect x="932" y="297" width="9" height="5.500" fill="#ee6666"/><rect x="943" y="297" width="9" height="5.500" fill="#bbdd44"/><rect x="953" y="297" width="9" height="5.500" fill="#888888"/><rect x="964" y="297" width="9" height="5.500" fill="#aaaaaa"/><rect x="974" y="297" width="9" height="5.500" fill="#cccccc"/><rect x="985" y="297" width="9" height="5.500" fill="#111111"/><rect x="995" y="297" width="9" height="5.500" fill="#ffffff"/>
</g>
<path d="M1011 261l4-5 4 5z" fill="#aaa"/><path d="M1011 296l4 5 4-5z" fill="#aaa"/>
<rect x="1008" y="263" width="14" height="24" rx="5" fill="#6e6e6e"/>
<rect x="762" y="303" width="262" height="25" fill="#2c2c2c"/>
<rect class="b" x="766.500" y="305.500" width="17" height="17" rx="3"/><path class="s" d="M770.500 309h6l3 3v7h-9z" stroke-width="1"/>
<rect x="786.500" y="305.500" width="17" height="17" rx="3" fill="#555" stroke="#666"/><path class="s" d="M790 311h10v8h-10zM792 311v-2h6v2M793 313v5M795 313v5M797 313v5" stroke-width="1"/>
<rect x="807" y="309" width="1" height="11" fill="#777"/>
<text x="811" y="318">Trắng</text>
<!-- layer -->
<rect x="762" y="331" width="262" height="2" class="l"/>
<rect x="762" y="333" width="262" height="14" class="h"/>
<text x="881" y="344" class="c">Lớp</text>
<use href="#pc" x="1017" y="340"/>
<text x="766" y="361">Độ trong</text>
<rect x="832" y="352" width="152" height="11" fill="url(#sl)"/>
<text x="989" y="361">100 %</text>
<text x="766" y="380">Pha trộn</text>
<rect x="833" y="367" width="186" height="17" rx="2" fill="#4b4b4b"/>
<text x="835" y="380">Bình thường</text>
<path d="M1010 374h6l-3 3z" fill="#888"/>
<rect x="768.500" y="391.500" width="7" height="7" fill="none" stroke="#bbb"/><text x="781" y="399">Bảo vệ alpha</text>
<rect x="855.500" y="391.500" width="7" height="7" fill="none" stroke="#4c4c4c"/><text x="867" y="399" style="fill:#707070">Xén bớt</text>
<rect x="940.500" y="391.500" width="7" height="7" fill="none" stroke="#bbb"/><text x="952" y="399">Khóa</text>
<rect x="764" y="406" width="243" height="56" fill="#4c4c4c"/>
<rect x="778" y="406" width="229" height="29" fill="#4f98d5"/>
<circle cx="771" cy="421" r="3.500" fill="#ddd"/>
<rect x="789" y="411" width="26" height="20" fill="#6fe4e0" stroke="#8fb8c8"/>
<path d="M795 417h12M797 423h10" stroke="#a8f0f0"/>
<text x="828" y="425" class="w" style="font-size:10.500px">tramanh6a2tt#Hoidap247</text>
<use href="#gear" transform="translate(998 421)"/>
<path d="M1012 411l3.500-4 3.500 4z" fill="#aaa"/><path d="M1012 455l3.500 4 3.500-4z" fill="#aaa"/>
<rect x="1009" y="414" width="14" height="38" rx="5" fill="#6e6e6e"/>
<rect class="b" x="766.500" y="464.500" width="17" height="17" rx="2"/><path class="s" d="M770.500 468h6l3 3v7h-9z" stroke-width="1"/>
<rect class="b" x="786.500" y="464.500" width="17" height="17" rx="2"/><path class="s" d="M790.500 468h6l3 3v7h-9z" stroke-width="1"/><text x="795" y="477" class="c" style="font-size:7px;fill:#eee">8</text>
<rect class="b" x="806.500" y="464.500" width="17" height="17" rx="2"/><path class="s" d="M810.500 468h6l3 3v7h-9z" stroke-width="1"/><text x="815" y="477" class="c" style="font-size:7px;fill:#eee">1</text>
<rect class="b" x="827.500" y="464.500" width="23" height="17" rx="2"/><path class="s" d="M830.500 468h6l2 2v7h-8zM836 479h5M838.500 476.500v5" stroke-width="1"/><path d="M843 471h5l-2.500 3z" fill="#e6e6e6"/>
<rect x="852.500" y="464.500" width="18" height="17" rx="2" fill="#555" stroke="#666"/><path class="i" d="M856 468h4l1.500 2h6v8H856z"/>
<rect x="874" y="467" width="1" height="11" fill="#555"/>
<rect class="b" x="878.500" y="464.500" width="17" height="17" rx="2"/><path class="s" d="M882 471h7v7h-7zM884 471v-3h7v7h-2" stroke-width="1"/>
<rect class="d" x="898.500" y="464.500" width="17" height="17" rx="2"/><path class="i" d="M901 468h5v3h-5zM901 475h5v3h-5zM908 471h5v4h-5z"/>
<rect x="919" y="467" width="1" height="11" fill="#555"/>
<rect class="d" x="923.500" y="464.500" width="17" height="17" rx="2"/><path class="s" d="M927 470h10v8h-10zM929 470v-2h6v2M930 472v5M932 472v5M934 472v5" stroke-width="1"/>
<!-- reference -->
<rect x="762" y="489" width="262" height="1" class="l"/>
<rect x="762" y="490" width="262" height="15" class="h"/>
<text x="881" y="502" class="c">Reference</text>
<use href="#pc" x="1017" y="497"/>
<rect class="b" x="765.500" y="507.500" width="17" height="18" rx="2"/><path class="i" d="M770 517a2.500 2.500 0 0 1 0-4 4 4 0 0 1 8 0 2.500 2.500 0 0 1 0 4h-2v6h-4v-6z"/>
<rect x="785.500" y="507.500" width="17" height="18" rx="2" fill="#555" stroke="#666"/><path class="i" d="M789 513h4l1.500 1.500h5v6H789z"/>
<rect class="d" x="805.500" y="507.500" width="17" height="18" rx="2"/><path d="M811 513l6 6m0-6l-6 6" stroke="#fff" stroke-width="1.800"/>
<rect x="826" y="510" width="1" height="11" fill="#555"/>
<rect class="b" x="831.500" y="507.500" width="17" height="18" rx="2"/><circle cx="839" cy="515" r="4" class="s"/><path class="s" d="M842 518l3 3M837 515h4M839 513v4"/>
<rect class="b" x="853.500" y="507.500" width="17" height="18" rx="2"/><path class="s" d="M857 513v-3h3M867 513v-3h-3M857 518v3h3M867 518v3h-3" stroke-width="1.200"/>
<rect class="b" x="873.500" y="507.500" width="16" height="18" rx="2"/><circle cx="881" cy="515" r="4" class="s"/><path class="s" d="M884 518l3 3M879 515h4"/>
<rect x="893" y="510" width="1" height="11" fill="#555"/>
<rect class="d" x="897.500" y="507.500" width="16" height="18" rx="2"/><path class="s" d="M901 522l-1-1 0-2 7-7 3 3-7 7z" stroke-width="1.200"/>
<rect x="917.500" y="507.500" width="17" height="18" rx="2" fill="#4d97d8" stroke="#5ea6e0"/><path class="i" d="M922 516l-1-6 1.500-.5 1.500 4V508h1.500l.5 5 .5-6h1.500l.5 6 1-5h1.500l-.5 7 1.500-1 1 1-3 6-2 2h-4l-2-4z"/>
<rect x="938" y="510" width="1" height="11" fill="#555"/>
<rect class="b" x="943.500" y="507.500" width="17" height="18" rx="2"/><circle cx="952" cy="516" r="5" class="s"/><path class="i" d="M949 514l6-2v5l-6 2z"/>
<rect class="d" x="963.500" y="507.500" width="17" height="18" rx="2"/><rect x="967" y="512" width="10" height="9" fill="#eee"/>
<rect class="b" x="983.500" y="507.500" width="17" height="18" rx="2"/><circle cx="992" cy="516" r="5" class="s"/><path class="i" d="M989 512l6 2v5l-6-2z"/>
<rect x="1004" y="510" width="1" height="11" fill="#555"/>
<rect x="1016" y="508" width="6" height="17" rx="2" fill="#4a4a4a"/>
<rect x="762" y="530" width="262" height="2" fill="#f0f0f0"/>
</svg>
</body></html>
